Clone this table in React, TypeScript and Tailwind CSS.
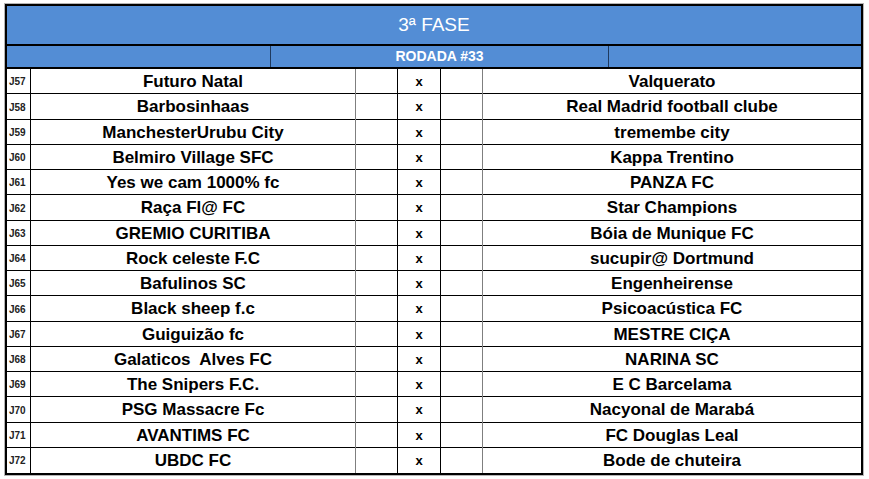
const jogos: [string, string, string][] = [
  ["J57", "Futuro Natal", "Valquerato"],
  ["J58", "Barbosinhaas", "Real Madrid football clube"],
  ["J59", "ManchesterUrubu City", "tremembe city"],
  ["J60", "Belmiro Village SFC", "Kappa Trentino"],
  ["J61", "Yes we cam 1000% fc", "PANZA FC"],
  ["J62", "Raça Fl@ FC", "Star Champions"],
  ["J63", "GREMIO CURITIBA", "Bóia de Munique FC"],
  ["J64", "Rock celeste F.C", "sucupir@ Dortmund"],
  ["J65", "Bafulinos SC", "Engenheirense"],
  ["J66", "Black sheep f.c", "Psicoacústica FC"],
  ["J67", "Guiguizão fc", "MESTRE CIÇA"],
  ["J68", "Galaticos  Alves FC", "NARINA SC"],
  ["J69", "The Snipers F.C.", "E C Barcelama"],
  ["J70", "PSG Massacre Fc", "Nacyonal de Marabá"],
  ["J71", "AVANTIMS FC", "FC Douglas Leal"],
  ["J72", "UBDC FC", "Bode de chuteira"],
];

export default function App() {
  return (
    <div className="w-[869px] h-[479px] bg-white pt-[4px] pl-[5px]" style={{ fontFamily: '"Liberation Sans", Arial, sans-serif' }}>
      <div className="w-[858px] border-2 border-black shadow-[0_0_0_1px_#b4b4b4]">
        {/* Título */}
        <div className="h-[40px] bg-[#538DD5] border-b-2 border-black flex items-center justify-center text-white text-[19px]">
          3ª FASE
        </div>
        {/* Rodada */}
        <div className="h-[23px] bg-[#538DD5] border-b-2 border-black grid grid-cols-[264px_338px_252px]">
          <div className="border-r border-[#1f3a5f]"></div>
          <div className="border-r border-[#1f3a5f] flex items-center justify-center text-white font-bold text-[14px]">
            RODADA #33
          </div>
          <div></div>
        </div>
        {/* Jogos */}
        <div className="flex flex-col">
          {jogos.map(([id, casa, fora], i) => (
            <div
              key={id}
              className={`h-[25.27px] grid grid-cols-[24px_325px_42px_43px_42px_378px] ${i < jogos.length - 1 ? "border-b border-black" : ""}`}
            >
              <div className="border-r border-black flex items-center pl-[2px] text-[10px] font-bold text-[#222]">{id}</div>
              <div className="border-r border-[#7f7f7f] flex items-center justify-center text-[17px] font-bold text-black whitespace-pre">{casa}</div>
              <div className="border-r border-black"></div>
              <div className="border-r border-black flex items-center justify-center text-[13px] font-bold text-black">x</div>
              <div className="border-r border-[#7f7f7f]"></div>
              <div className="flex items-center justify-center text-[17px] font-bold text-black whitespace-pre">{fora}</div>
            </div>
          ))}
        </div>
      </div>
    </div>
  );
}
